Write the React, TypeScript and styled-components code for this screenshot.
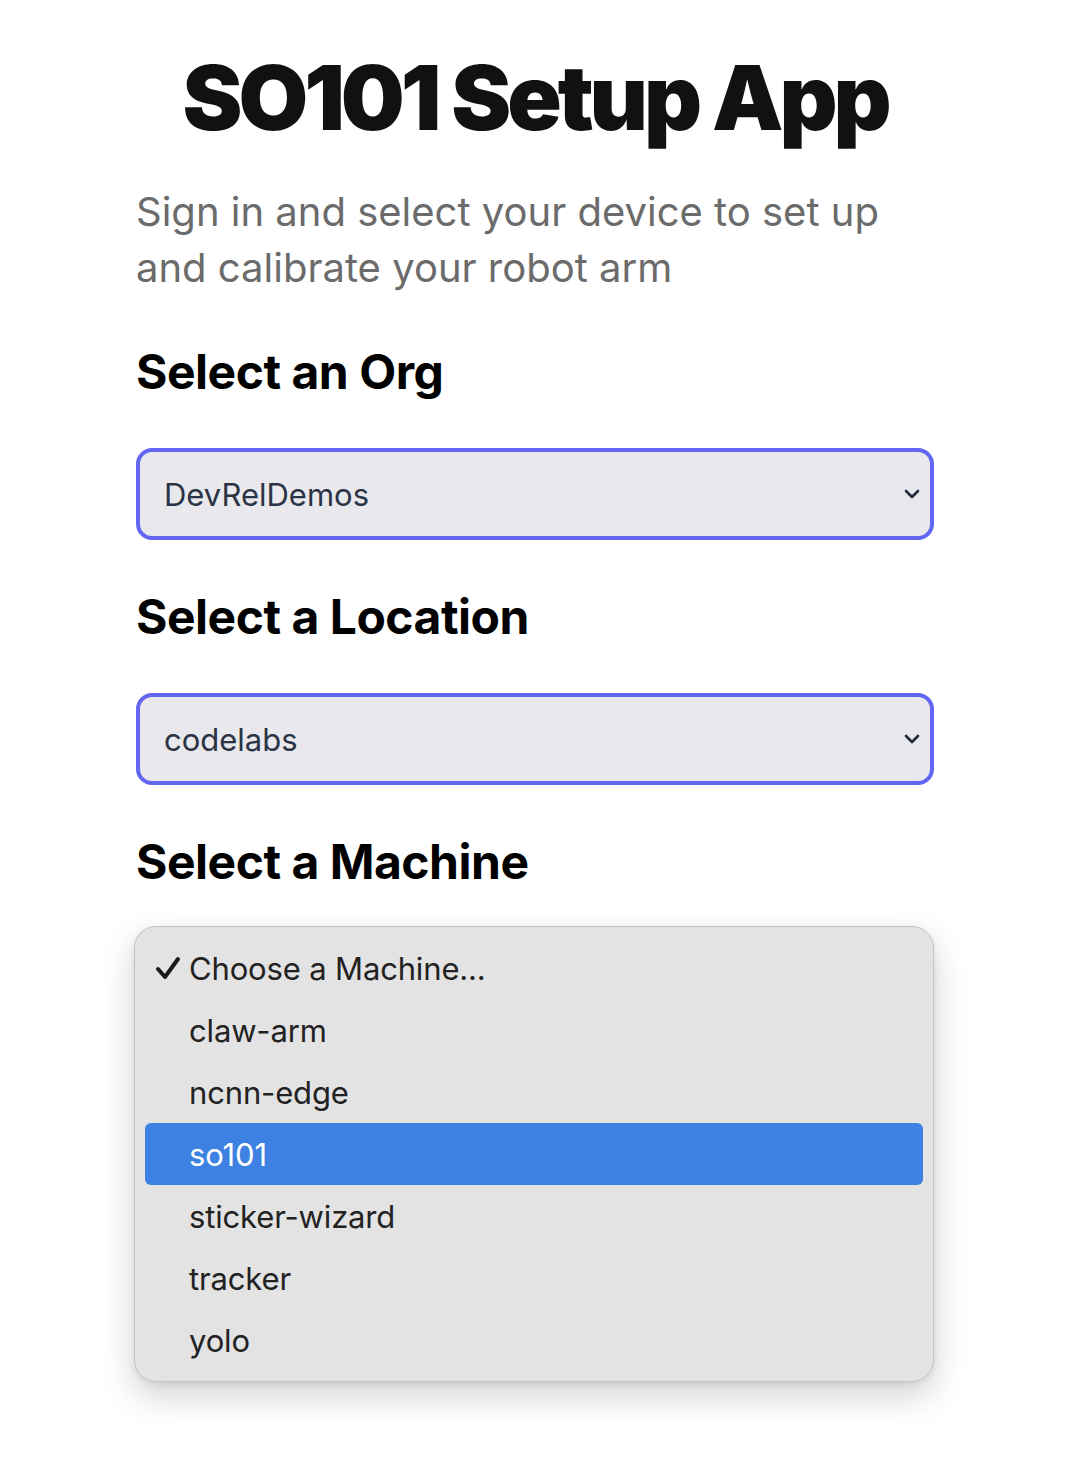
import React from "react";
import styled, { createGlobalStyle } from "styled-components";

const GlobalStyle = createGlobalStyle`
  html, body { margin: 0; padding: 0; background: #ffffff; }
  body { font-family: Inter, "Noto Sans", sans-serif; -webkit-font-smoothing: antialiased; }
`;

const Page = styled.main`
  box-sizing: border-box;
  width: 934px;
  min-height: 1472px;
  padding: 53px 0 80px 136px;
  display: flex;
  flex-direction: column;
`;

const Title = styled.h1`
  margin: 0 0 41px;
  font-family: Inter, sans-serif;
  font-size: 90px;
  line-height: 90px;
  font-weight: 900;
  letter-spacing: -0.045em;
  color: #111111;
  text-align: center;
`;

const Subtitle = styled.p`
  margin: 0 0 44px;
  font-size: 40px;
  line-height: 56px;
  font-weight: 400;
  color: #6b6b6b;
`;

const Section = styled.section`
  display: flex;
  flex-direction: column;
  gap: 44px;
  margin-bottom: 45px;
`;

const Heading = styled.h2`
  margin: 0;
  font-size: 48px;
  line-height: 64px;
  font-weight: 700;
  color: #000000;
  letter-spacing: -0.01em;
`;

const SelectWrap = styled.div`
  position: relative;
`;

const SelectBox = styled.div`
  box-sizing: border-box;
  height: 92px;
  width: 798px;
  border: 4px solid #6366f1;
  border-radius: 16px;
  background: #e8e8ed;
  display: flex;
  align-items: center;
  justify-content: space-between;
  padding: 0 10px 0 24px;
  font-size: 31px;
  color: #2b3445;
`;

const Chevron = () => (
  <svg width="16" height="10" viewBox="0 0 16 10" aria-hidden="true">
    <path d="M2 2 L8 8 L14 2" fill="none" stroke="#1e293b" strokeWidth="2.6" strokeLinecap="round" strokeLinejoin="round" />
  </svg>
);

const Menu = styled.ul`
  position: absolute;
  top: -12px;
  left: -2px;
  width: 800px;
  box-sizing: border-box;
  margin: 0;
  padding: 10px 10px;
  list-style: none;
  background: #e3e3e3;
  border: 1px solid #c4c4c4;
  border-radius: 22px;
  box-shadow: 0 14px 34px rgba(0, 0, 0, 0.18), 0 2px 6px rgba(0, 0, 0, 0.08);
  z-index: 10;
`;

const Item = styled.li<{ $active?: boolean }>`
  height: 62px;
  display: flex;
  align-items: center;
  border-radius: 6px;
  padding-left: 10px;
  font-size: 31px;
  letter-spacing: -0.005em;
  color: ${(p) => (p.$active ? "#ffffff" : "#222222")};
  background: ${(p) => (p.$active ? "#3d82e3" : "transparent")};
`;

const Check = styled.span`
  width: 34px;
  display: inline-flex;
  align-items: center;
`;

const CheckIcon = () => (
  <svg width="26" height="24" viewBox="0 0 26 24" aria-hidden="true">
    <path d="M3 13 L10 21 L23 3" fill="none" stroke="#1a1a1a" strokeWidth="4" strokeLinecap="round" strokeLinejoin="round" />
  </svg>
);

const machines = ["claw-arm", "ncnn-edge", "so101", "sticker-wizard", "tracker", "yolo"];

export default function App() {
  return (
    <>
      <GlobalStyle />
      <Page>
        <Title>SO101 Setup App</Title>
        <Subtitle>Sign in and select your device to set up and calibrate your robot arm</Subtitle>

        <Section>
          <Heading>Select an Org</Heading>
          <SelectWrap>
            <SelectBox>
              <span>DevRelDemos</span>
              <Chevron />
            </SelectBox>
          </SelectWrap>
        </Section>

        <Section>
          <Heading>Select a Location</Heading>
          <SelectWrap>
            <SelectBox>
              <span>codelabs</span>
              <Chevron />
            </SelectBox>
          </SelectWrap>
        </Section>

        <Section>
          <Heading>Select a Machine</Heading>
          <SelectWrap>
            <SelectBox>
              <span>Choose a Machine...</span>
              <Chevron />
            </SelectBox>
            <Menu role="listbox">
              <Item>
                <Check><CheckIcon /></Check>
                Choose a Machine...
              </Item>
              {machines.map((m) => (
                <Item key={m} $active={m === "so101"}>
                  <Check />
                  {m}
                </Item>
              ))}
            </Menu>
          </SelectWrap>
        </Section>
      </Page>
    </>
  );
}
